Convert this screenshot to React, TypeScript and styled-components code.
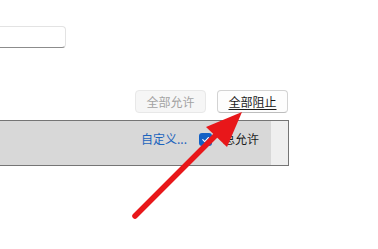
import styled, { createGlobalStyle } from 'styled-components'

const GlobalStyle = createGlobalStyle`
  html, body {
    margin: 0;
    padding: 0;
    background: #ffffff;
    overflow: hidden;
  }
  body {
    font-family: "Noto Sans CJK SC", "Noto Sans", sans-serif;
    font-size: 12px;
    color: #1b1b1b;
  }
`

export default function App() {
  return (
    <>
      <GlobalStyle />
      <Page>
        <SearchInput />
        <ButtonRow>
          <ActionButton disabled>全部允许</ActionButton>
          <ActionButton $underline>全部阻止</ActionButton>
        </ButtonRow>
        <ListPanel>
          <ListRow>
            <LinkText>自定义...</LinkText>
            <CheckLabel>
              <CheckBox>
                <svg width="9" height="9" viewBox="0 0 10 10">
                  <path
                    d="M2 5.2 L4.2 7.3 L8.2 2.8"
                    fill="none"
                    stroke="#ffffff"
                    strokeWidth="1.3"
                    strokeLinecap="round"
                    strokeLinejoin="round"
                  />
                </svg>
              </CheckBox>
              总允许
            </CheckLabel>
          </ListRow>
          <ScrollTrack />
        </ListPanel>
        <Arrow width="378" height="249" viewBox="0 0 378 249">
          <line
            x1="135"
            y1="216"
            x2="222"
            y2="129"
            stroke="#e8171a"
            strokeWidth="5.5"
            strokeLinecap="round"
          />
          <polygon points="242,112 206,127 227,147" fill="#e8171a" />
        </Arrow>
      </Page>
    </>
  )
}

// ========== Styled Components ==========

const Page = styled.div`
  position: relative;
  width: 378px;
  height: 249px;
  padding-top: 26px;
  box-sizing: border-box;
  display: flex;
  flex-direction: column;
`

const SearchInput = styled.div`
  margin-left: -20px;
  width: 86px;
  height: 22px;
  box-sizing: border-box;
  border: 1px solid #e3e3e3;
  border-bottom: 1px solid #8c8c8c;
  border-radius: 4px;
  background: #ffffff;
`

const ButtonRow = styled.div`
  margin-top: 42px;
  width: 288px;
  display: flex;
  justify-content: flex-end;
  gap: 11px;
`

const ActionButton = styled.button<{ $underline?: boolean }>`
  width: 71px;
  height: 23px;
  box-sizing: border-box;
  padding: 0;
  font-family: inherit;
  font-size: 12px;
  line-height: 1;
  border-radius: 4px;
  border: 1px solid #d3d3d3;
  border-bottom-color: #bdbdbd;
  background: #fdfdfd;
  color: #1b1b1b;
  text-decoration: ${(p) => (p.$underline ? 'underline' : 'none')};
  text-underline-offset: 2px;

  &:disabled {
    background: #f6f6f6;
    border-color: #e8e8e8;
    color: #a3a3a3;
  }
`

const ListPanel = styled.div`
  margin-top: 7px;
  margin-left: -20px;
  width: 309px;
  height: 46px;
  box-sizing: border-box;
  border: 1px solid #757575;
  border-left: none;
  display: flex;
`

const ListRow = styled.div`
  flex: 1;
  background: #d8d8d8;
  display: flex;
  justify-content: flex-end;
  align-items: flex-start;
  gap: 12px;
  padding: 10px 12px 0 0;
`

const LinkText = styled.span`
  color: #1d64bd;
  font-size: 12px;
  line-height: 16px;
`

const CheckLabel = styled.span`
  display: flex;
  align-items: center;
  gap: 11px;
  font-size: 12px;
  line-height: 16px;
  color: #1b1b1b;
`

const CheckBox = styled.span`
  width: 13px;
  height: 13px;
  border-radius: 3px;
  background: #1160c5;
  display: flex;
  align-items: center;
  justify-content: center;
`

const ScrollTrack = styled.div`
  width: 17px;
  background: #efefef;
`

const Arrow = styled.svg`
  position: absolute;
  left: 0;
  top: 0;
  pointer-events: none;
`
